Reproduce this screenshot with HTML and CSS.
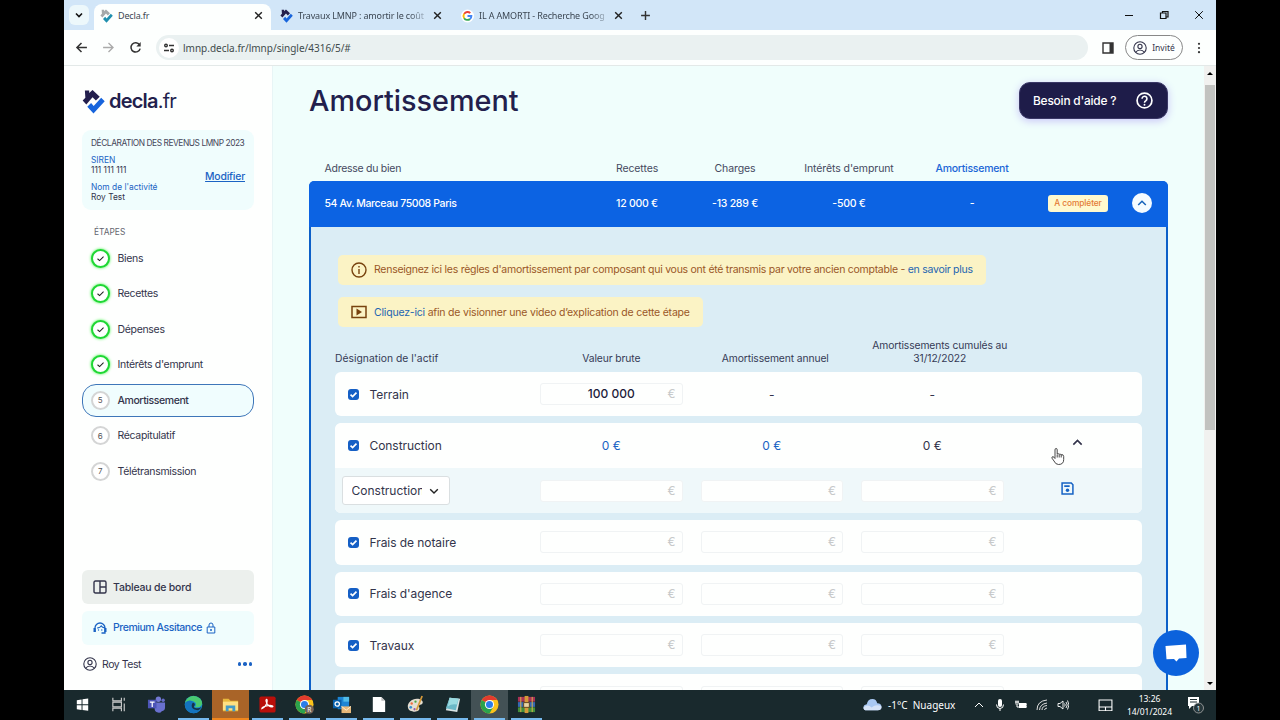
FILE: index.html
```html
<!DOCTYPE html>
<html lang="fr">
<head>
    <meta charset="UTF-8">
    <title>Decla.fr</title>
    <link rel="stylesheet" href="styles.css">
</head>
<body>
<svg class="sprite">
    <symbol id="x" viewBox="0 0 10 10"><path d="M2 2l6 6M8 2l-6 6" fill="none" stroke="currentColor" stroke-width="1.3"/></symbol>
    <symbol id="up" viewBox="0 0 10 10"><path d="M1.2 7L5 3.2 8.8 7" fill="none" stroke="currentColor" stroke-width="1.5"/></symbol>
    <symbol id="check" viewBox="0 0 10 10"><path d="M1.7 5.3l2.3 2L8.4 3" fill="none" stroke="currentColor" stroke-width="1.2"/></symbol>
    <symbol id="tick" viewBox="0 0 10 10"><path d="M1.700 5.200l2.300 2.200L8.300 3" fill="none" stroke="currentColor" stroke-width="1.900"/></symbol>
    <symbol id="user" viewBox="0 0 14 14"><g fill="none" stroke="currentColor" stroke-width="1.1"><circle cx="7" cy="7" r="6.2"/><circle cx="7" cy="5.4" r="2.1"/><path d="M2.8 11.2c1.8-3 6.600-3 8.400 0"/></g></symbol>
    <symbol id="logo" viewBox="0 0 24 26"><path class="roof" d="M3 1.500h4.500V4l3.500-3 7.500 7-4 4-3.500-3.500-6.500 7.500L.7 12 3.500 9z"/><path class="tick" d="M5.500 18.500l4-4 2.700 3.200 7.800-8.700 3.700 3.700L12 25.500z"/></symbol>
    <symbol id="chrome" viewBox="0 0 20 20"><circle cx="10" cy="10" r="9.500" fill="#fbc31b"/><path d="M10 10L1.800 5.250A9.500 9.500 0 0 1 18.200 5.250H10z" fill="#e33b2e"/><path d="M10 10L1.800 5.250A9.500 9.500 0 0 0 10 19.500l4.100-7.100z" fill="#2ba24c"/><circle cx="10" cy="10" r="4.800" fill="#fff"/><circle cx="10" cy="10" r="3.700" fill="#2b7de9"/></symbol>
</svg>
<div class="screen">
    <div class="tabs">
        <span class="tab-list"><svg viewBox="0 0 10 10" width="10"><path d="M2 3.500l3 3 3-3" fill="none" stroke="#111" stroke-width="1.600"/></svg></span>
        <div class="tab active">
            <svg class="favicon pale"><use href="#logo"/></svg>
            <span class="tab-name">Decla.fr</span>
            <svg class="close"><use href="#x"/></svg>
        </div>
        <div class="tab second">
            <svg class="favicon"><use href="#logo"/></svg>
            <span class="tab-name fade">Travaux LMNP : amortir le coût</span>
            <svg class="close"><use href="#x"/></svg>
        </div>
        <div class="tab third">
            <svg class="favicon" viewBox="0 0 14 14"><circle cx="7" cy="7" r="7" fill="#fff"/><g fill="none" stroke-width="2"><path d="M3.400 4.700A4.200 4.200 0 0 1 10 4" stroke="#ea4335"/><path d="M3.400 9.300a4.200 4.200 0 0 1 0-4.600" stroke="#fbbc05"/><path d="M3.400 9.300A4.200 4.200 0 0 0 9.700 10.200" stroke="#34a853"/><path d="M7 7h4.200a4 4 0 0 1-1.500 3.200" stroke="#4285f4"/></g></svg>
            <span class="tab-name fade">IL A AMORTI - Recherche Goog</span>
            <svg class="close"><use href="#x"/></svg>
        </div>
        <svg class="plus" viewBox="0 0 10 10"><path d="M5 1v8M1 5h8" stroke="#333" stroke-width="1.300"/></svg>
        <div class="window-buttons">
            <svg viewBox="0 0 10 10"><path d="M1 5.500h8" stroke="#111"/></svg>
            <svg viewBox="0 0 10 10"><path d="M1.500 3h5.500v5.500H1.500zM3.500 3V1.500h5.500V7H7" fill="none" stroke="#111" stroke-width="1.200"/></svg>
            <svg viewBox="0 0 10 10"><path d="M1.200 1.200l7.600 7.600M8.800 1.200L1.200 8.800" stroke="#111"/></svg>
        </div>
    </div>
    <div class="toolbar">
        <svg class="nav" viewBox="0 0 12 12"><path d="M11 6H2M6 1.800L1.800 6 6 10.200" fill="none" stroke="#333" stroke-width="1.400"/></svg>
        <svg class="nav" viewBox="0 0 12 12"><path d="M1 6h9M6 1.800L10.200 6 6 10.200" fill="none" stroke="#aaa" stroke-width="1.200"/></svg>
        <svg class="nav" viewBox="0 0 12 12"><path d="M9.700 3.500A4.300 4.300 0 1 0 10.300 7" fill="none" stroke="#333" stroke-width="1.400"/><path d="M10.800 1v4h-4z" fill="#333"/></svg>
        <div class="address">
            <span class="site-info"><svg viewBox="0 0 12 12" width="12"><g fill="none" stroke="#333" stroke-width="1.400"><circle cx="3" cy="3.500" r="1.300"/><path d="M6 3.500h5M1 8.500h5"/><circle cx="9" cy="8.500" r="1.300"/></g></svg></span>
            <span>lmnp.decla.fr/lmnp/single/4316/5/#</span>
        </div>
        <svg class="panel-icon" viewBox="0 0 12 12"><path d="M1 1h10v10H1z" fill="none" stroke="#333" stroke-width="1.400"/><path d="M7.500 1H11v10H7.500z" fill="#333"/></svg>
        <span class="guest"><svg><use href="#user"/></svg>Invité</span>
        <svg class="kebab" viewBox="0 0 4 12"><g fill="#333"><circle cx="2" cy="1.800" r="1.100"/><circle cx="2" cy="6" r="1.100"/><circle cx="2" cy="10.200" r="1.100"/></g></svg>
    </div>
    <div class="page">
        <aside class="sidebar">
            <div class="brand"><svg><use href="#logo"/></svg><span>decla<i>.fr</i></span></div>
            <div class="declaration">
                <p class="caption">DÉCLARATION DES REVENUS LMNP 2023</p>
                <div class="company">
                    <div>
                        <p class="blue">SIREN</p>
                        <p>111 111 111</p>
                        <p class="blue name">Nom de l'activité</p>
                        <p>Roy Test</p>
                    </div>
                    <a href="#">Modifier</a>
                </div>
            </div>
            <p class="steps-title">ÉTAPES</p>
            <ul class="steps">
                <li><b class="done"><svg><use href="#check"/></svg></b>Biens</li>
                <li><b class="done"><svg><use href="#check"/></svg></b>Recettes</li>
                <li><b class="done"><svg><use href="#check"/></svg></b>Dépenses</li>
                <li><b class="done"><svg><use href="#check"/></svg></b>Intérêts d'emprunt</li>
                <li class="current"><b>5</b>Amortissement</li>
                <li><b>6</b>Récapitulatif</li>
                <li><b>7</b>Télétransmission</li>
            </ul>
            <div class="side-links">
                <div class="dashboard"><svg viewBox="0 0 14 14"><path d="M2.500 1h9q1.500 0 1.500 1.500v9q0 1.500-1.500 1.500h-9Q1 13 1 11.500v-9Q1 1 2.500 1zM7 1v12M7 7h6" fill="none" stroke="currentColor" stroke-width="1.400"/></svg>Tableau de bord</div>
                <div class="premium"><svg viewBox="0 0 14 14"><path d="M2 11V7a5 5 0 0 1 10 0v5H8.500M4.300 7c2.500-.2 3.400-1.200 3.900-2 .8 1.300 2 1.800 3.500 1.800" fill="none" stroke="currentColor" stroke-width="1.300"/><path d="M.5 7h2.200v4H.5zM11.300 7h2.200v4h-2.200z" fill="currentColor"/><circle cx="5.500" cy="9" r=".7" fill="currentColor"/><circle cx="8.800" cy="9" r=".7" fill="currentColor"/></svg><span>Premium Assitance</span><svg class="lock" viewBox="0 0 10 12"><path d="M1.200 5h7.600v6H1.200zM3 5V3a2 2 0 0 1 4 0v2" fill="none" stroke="currentColor"/><circle cx="5" cy="8" r="1" fill="currentColor"/></svg></div>
                <div class="account"><svg><use href="#user"/></svg>Roy Test<span class="dots"><i></i><i></i><i></i></span></div>
            </div>
        </aside>
        <main>
            <div class="heading">
                <h1>Amortissement</h1>
                <button>Besoin d'aide ?<svg viewBox="0 0 16 16"><circle cx="8" cy="8" r="7" fill="none" stroke="#fff" stroke-width="1.600"/><path d="M5.700 6.300a2.300 2.300 0 1 1 3.600 1.900Q8 9 8 10" fill="none" stroke="#fff" stroke-width="1.500"/><circle cx="8" cy="12" r=".9" fill="#fff"/></svg></button>
            </div>
            <div class="property-grid property-labels">
                <span>Adresse du bien</span><span>Recettes</span><span>Charges</span><span>Intérêts d'emprunt</span><span class="selected">Amortissement</span>
            </div>
            <section class="property">
                <div class="property-grid property-head">
                    <span>54 Av. Marceau 75008 Paris</span><span>12 000 €</span><span>-13 289 €</span><span>-500 €</span><span>-</span><span><em>A compléter</em></span><span class="toggle"><svg><use href="#up"/></svg></span>
                </div>
                <div class="property-body">
                    <div class="notice first"><svg viewBox="0 0 16 16"><circle cx="8" cy="8" r="7" fill="none" stroke="currentColor" stroke-width="1.400"/><path d="M8 7v5M8 4v1.600" stroke="currentColor" stroke-width="1.400"/></svg><span>Renseignez ici les règles d'amortissement par composant qui vous ont été transmis par votre ancien comptable - <a>en savoir plus</a></span></div>
                    <div class="notice video"><svg viewBox="0 0 16 16"><path d="M1 2.500h14v11H1z" fill="none" stroke="currentColor" stroke-width="1.500"/><path d="M5.500 4.500L11 8l-5.500 3.500z" fill="currentColor"/></svg><span><a>Cliquez-ici</a> afin de visionner une video d’explication de cette étape</span></div>
                    <div class="asset-grid asset-labels">
                        <span>Désignation de l'actif</span><span>Valeur brute</span><span class="yearly">Amortissement annuel</span><span class="total">Amortissements cumulés au 31/12/2022</span>
                    </div>
                    <div class="assets">
                        <div class="asset asset-grid">
                            <label><b><svg><use href="#tick"/></svg></b>Terrain</label>
                            <span class="field">100 000<i>€</i></span><span>-</span><span>-</span>
                        </div>
                        <div class="asset-group">
                            <div class="asset asset-grid">
                                <label><b><svg><use href="#tick"/></svg></b>Construction</label>
                                <span class="blue">0 €</span><span class="blue">0 €</span><span>0 €</span>
                                <svg class="collapse"><use href="#up"/></svg>
                            </div>
                            <div class="component asset-grid">
                                <div class="select"><span>Construction</span><svg viewBox="0 0 10 10"><path d="M1.200 3.200L5 7l3.800-3.800" fill="none" stroke="#222" stroke-width="1.400"/></svg></div>
                                <span class="field"><i>€</i></span><span class="field"><i>€</i></span><span class="field"><i>€</i></span>
                                <svg class="save" viewBox="0 0 12 12"><path d="M1 1h8.500L11 2.500V11H1z" fill="none" stroke="currentColor" stroke-width="1.400"/><path d="M3 3h5v1.600H3z" fill="currentColor"/><circle cx="6" cy="7.700" r="1.600" fill="currentColor"/></svg>
                            </div>
                        </div>
                        <div class="asset asset-grid">
                            <label><b><svg><use href="#tick"/></svg></b>Frais de notaire</label>
                            <span class="field"><i>€</i></span><span class="field"><i>€</i></span><span class="field"><i>€</i></span>
                        </div>
                        <div class="asset asset-grid">
                            <label><b><svg><use href="#tick"/></svg></b>Frais d'agence</label>
                            <span class="field"><i>€</i></span><span class="field"><i>€</i></span><span class="field"><i>€</i></span>
                        </div>
                        <div class="asset asset-grid">
                            <label><b><svg><use href="#tick"/></svg></b>Travaux</label>
                            <span class="field"><i>€</i></span><span class="field"><i>€</i></span><span class="field"><i>€</i></span>
                        </div>
                        <div class="asset asset-grid"><label></label><span class="field"></span><span class="field"></span><span class="field"></span></div>
                    </div>
                </div>
            </section>
        </main>
        <div class="scrollbar"><svg viewBox="0 0 8 8"><path d="M1 6l3-3 3 3z"/></svg><span class="thumb"></span><svg viewBox="0 0 8 8"><path d="M1 2l3 3 3-3z"/></svg></div>
        <div class="chat"><svg viewBox="0 0 22 18"><path d="M.5 2L21 .5l.5 13.500-7.500.5-2.500 3-2.500-2.500-7.500.3z" fill="#fff"/></svg></div>
        <svg class="pointer" viewBox="0 0 14 18"><path d="M4 10V2.300q0-1.300 1.100-1.300t1.100 1.300V6.500q1-.9 1.900.3 1-.8 1.900.4 2.500-.7 2.700 1.800v3q0 5-5.200 5Q4.500 17 3 13.500L1 10.700q-.5-1.500.9-1.500Q3 9.200 4 11zM6.200 7v3M8.200 7.200V10M10.200 7.500V10" fill="#fff" stroke="#333" stroke-width=".9"/></svg>
    </div>
    <div class="taskbar">
        <span><svg viewBox="0 0 20 20"><path d="M4 5.500l5-.8v5H4zM10 4.500l6-.9v6.100h-6zM4 10.700h5v5l-5-.8zM10 10.700h6v6l-6-.9z" fill="#fff"/></svg></span>
        <span><svg viewBox="0 0 20 20"><path d="M3 3v3h9V3M3 17v-3h9v3M3 7.500h9v5H3zM15 3v3M15 9v8" fill="none" stroke="#ccc" stroke-width="1.200"/></svg></span>
        <span><svg viewBox="0 0 20 20"><circle cx="12" cy="4.500" r="2.800" fill="#7379d5"/><circle cx="17" cy="5.500" r="1.800" fill="#656bc8"/><path d="M8 8h11v5q0 4-3.500 4-1 2-4 1.500-3.500-.5-3.500-4.500z" fill="#6970cf"/><path d="M1 5h9v9H1z" fill="#4d55b7"/><path d="M3 7.500h5M5.500 7.500v5" stroke="#fff" stroke-width="1.300"/></svg></span>
        <span class="open"><svg viewBox="0 0 20 20"><circle cx="10" cy="10" r="9.300" fill="#1688cd"/><path d="M1 9C2 2 9-.5 14.500 2 20 4.600 21 12 15 13h-4q3-3 .5-5.500Q8 5 4 6.500z" fill="#49ca72"/><path d="M1.500 7.500Q7 3.700 9.500 8q-3 2-.5 5.800 2.500 3.300 8 1.700-4.500 5.400-10 3Q1 16 1 10z" fill="#1473bf"/><path d="M9.500 8q2 .5 2 2.500-2 2-.3 2.800 3.800 1.600 7-.6-1.200 3.600-5 3.200Q8 15 8 11q.2-2 1.500-3z" fill="#17324a"/></svg></span>
        <span class="open explorer"><svg viewBox="0 0 20 20"><path d="M2 4h6l2 2h8v11H2z" fill="#e9b83d"/><path d="M2 7h16v9H2z" fill="#ffe083"/><path d="M5 17v-6h10v6h-3v-3H8v3z" fill="#459bc7"/></svg></span>
        <span class="open"><svg viewBox="0 0 20 20"><rect x="1.500" y="1.500" width="17" height="17" rx="2" fill="#b90f0a"/><path d="M4 14.500c2-.3 6-5 5.700-8.500-.2-2.700-2-1.500-1 1.500s4 5.500 6.300 5c2.300-.8-.8-2-4.500-1.300S4 13 4 14.500z" fill="none" stroke="#fff" stroke-width="1.200"/></svg></span>
        <span class="open"><svg viewBox="0 0 20 20"><use href="#chrome"/><circle cx="15" cy="15" r="4.800" fill="#766458"/><text x="13" y="17.500">R</text></svg></span>
        <span class="open"><svg viewBox="0 0 20 20"><path d="M6 2h12v13H6z" fill="#1d85d4"/><path d="M12 2h6v5h-6z" fill="#50bce9"/><path d="M1 5h9v9H1z" fill="#0861ad"/><circle cx="5.500" cy="9.500" r="2.300" fill="none" stroke="#fff" stroke-width="1.300"/><path d="M10 12h10v7H10z" fill="#e8b878"/><path d="M10 12l5 4 5-4" fill="none" stroke="#fff0d0"/></svg></span>
        <span class="open"><svg viewBox="0 0 20 20"><path d="M4 2h9l4 4v12H4z" fill="#fff"/><path d="M13 2v4h4z" fill="#bbb"/></svg></span>
        <span class="open"><svg viewBox="0 0 20 20"><path d="M2 13C1 8 7 3 13 4c5 1 6 5 3 6-3 .8-3 1.500-2 3 1 3-2 5-6 4.500S2.500 16 2 13z" fill="#e5ded1"/><circle cx="6" cy="9" r="1.300" fill="#ef6b42"/><circle cx="10" cy="7" r="1.200" fill="#46a647"/><circle cx="5" cy="13" r="1.400" fill="#398ed0"/><circle cx="9" cy="15" r="1.200" fill="#9a59a8"/><path d="M17 1l-6 15" stroke="#d89b3b" stroke-width="1.800"/></svg></span>
        <span class="open"><svg viewBox="0 0 20 20"><path d="M7 3l11 1-3 14-12-2z" fill="#d9e3e4"/><path d="M7 3l9.500 1-3 12L3 14z" fill="#6bb8c7"/><path d="M7 3l9.500 1-2 6Q9 9 5 12z" fill="#9bdbe1"/></svg></span>
        <span class="open browser"><svg viewBox="0 0 20 20"><use href="#chrome"/></svg></span>
        <span class="open"><svg viewBox="0 0 20 20"><path d="M1 2h18v5H1z" fill="#a83256"/><path d="M1 7.500h18v5H1z" fill="#3569b3"/><path d="M1 13h18v5H1z" fill="#438e3a"/><path d="M8 1h4v18H8z" fill="#d59a38"/><path d="M7 8h6v5H7z" fill="#ead4a4" stroke="#63431b"/><path d="M4 2v16M16 2v16" stroke="#e2b84b"/></svg></span>
        <div class="tray">
            <svg class="cloud" viewBox="0 0 20 14"><path d="M4 13q-3.500 0-3.500-3T4 6.500Q5 1 10 1q4 0 5 4.500 4.500.2 4.500 4 0 3.500-4 3.500z" fill="#a9c8f2"/><path d="M4 13q-3.500 0-3.500-3Q5 6 9 10q5-4 10.500-1 0 4-4 4z" fill="#d6e3f7"/></svg>
            <span class="weather">-1°C&nbsp; Nuageux</span>
            <svg class="small" viewBox="0 0 12 12"><path d="M2 8l4-4 4 4" fill="none" stroke="#fff"/></svg>
            <svg class="small" viewBox="0 0 12 12"><rect x="4" y="0" width="4" height="8" rx="2" fill="#fff"/><path d="M2.500 5.500q0 4 3.500 4t3.500-4M6 9.500V12" fill="none" stroke="#fff"/></svg>
            <svg class="small" viewBox="0 0 12 12"><path d="M4 4h7v5H4z" fill="#fff"/><path d="M11 5h1v3h-1M0 3h4M1 1.500v4M3 1.500v4M2 5v3h3" fill="none" stroke="#fff"/></svg>
            <svg class="small" viewBox="0 0 12 12"><g fill="none" stroke="#ddd"><path d="M1 11Q1 2 11 1M3.500 11Q4 5 11 4M6 11q0-4 5-4.500M8.500 11q0-1.500 2.500-2"/></g></svg>
            <svg class="small" viewBox="0 0 12 12"><path d="M1 4.500h2L6 2v8L3 7.500H1zM7.500 4.500q1.500 1.500 0 3M9 3q2.500 3 0 6M10.500 1.500q3 4.500 0 9" fill="none" stroke="#fff" stroke-width=".9"/></svg>
            <svg class="touchpad" viewBox="0 0 14 12"><path d="M1 1h12v10H1zM1 7.500h12M7 7.500V11" fill="none" stroke="#fff"/></svg>
            <span class="clock">13:26<br>14/01/2024</span>
            <svg class="alerts" viewBox="0 0 20 18"><path d="M2 1h11v9H6l-3 3v-3H2z" fill="#fff"/><path d="M4 3.500h7M4 6h7" stroke="#1a292d"/><circle cx="12.500" cy="12" r="5" fill="#26363a" stroke="#aaa" stroke-width=".8"/><text x="10.500" y="15">1</text></svg>
        </div>
    </div>
</div>
</body>
</html>
```
FILE: styles.css
```css
*{
    box-sizing: border-box;
}
body,h1,p,ul{
    margin: 0;
    padding: 0;
}
body{
    width: 1280px;
    height: 720px;
    overflow: hidden;
    background: #000;
    font-family: Inter, "Liberation Sans", sans-serif;
    color: #33344b;
}
svg{
    flex: none;
}
i,em{
    font-style: normal;
}
.sprite{
    position: absolute;
    width: 0;
    height: 0;
}
.screen{
    width: 1152px;
    height: 720px;
    margin: 0 auto;
    display: flex;
    flex-direction: column;
}
.roof{
    fill: var(--roof, #231f4d);
}
.tick{
    fill: var(--tick, #1764dc);
}
.pale{
    --roof: #a5a9aa;
    --tick: #1f8fae;
}
.blue{
    color: #1b63c4;
}

/* browser */
.tabs{
    display: flex;
    align-items: center;
    height: 30px;
    background: #d2e6f8;
    font: 9px "Noto Sans", sans-serif;
    color: #3b4652;
}
.tab-list{
    display: flex;
    align-items: center;
    justify-content: center;
    width: 20px;
    height: 20px;
    margin: 0 5px;
    border-radius: 6px;
    background: #edf8fb;
}
.tab{
    display: flex;
    align-items: center;
    height: 26px;
    margin-top: 4px;
    padding: 0 7px 3px;
}
.active{
    width: 177px;
    border-radius: 8px 8px 0 0;
    background: #fdfffe;
}
.active .favicon{
    margin-left: -1px;
}
.second{
    width: 182px;
    padding-left: 9px;
    padding-right: 10px;
}
.third{
    width: 178px;
    padding-left: 8px;
}
.favicon{
    width: 13px;
    height: 14px;
    margin-right: 5px;
}
.tab-name{
    flex: 1;
    overflow: hidden;
    white-space: nowrap;
    letter-spacing: -.150px;
}
.fade{
    -webkit-mask-image: linear-gradient(90deg, #000 88%, rgba(0,0,0,.3) 100%);
}
.second .tab-name,.third .tab-name{
    flex: 0 0 126px;
}
.close{
    width: 11px;
    height: 11px;
    margin-left: auto;
    color: #222;
}
.plus{
    width: 11px;
    margin-left: 9px;
}
.window-buttons{
    display: flex;
    gap: 25px;
    margin-left: auto;
    padding-right: 12px;
}
.window-buttons svg{
    width: 10px;
}
.toolbar{
    display: flex;
    align-items: center;
    height: 36px;
    padding: 0 10px 0 11px;
    background: #fdfffe;
    border-bottom: 1px solid #e3e9e8;
}
.nav{
    width: 13px;
    margin-right: 14px;
}
.address{
    display: flex;
    align-items: center;
    gap: 4px;
    width: 932px;
    height: 25px;
    padding-left: 3px;
    border-radius: 13px;
    background: #eaf1f1;
    font: 10px "Noto Sans", sans-serif;
    color: #414b4c;
}
.site-info{
    display: flex;
    align-items: center;
    justify-content: center;
    width: 20px;
    height: 20px;
    border-radius: 50%;
    background: #fff;
}
.panel-icon{
    width: 12px;
    margin-left: 14px;
}
.guest{
    display: flex;
    align-items: center;
    justify-content: center;
    gap: 5px;
    width: 58px;
    height: 25px;
    margin-left: 11px;
    border: 1px solid #888;
    border-radius: 13px;
    font: 8.500px "Noto Sans", sans-serif;
}
.guest svg{
    width: 14px;
    height: 14px;
}
.kebab{
    width: 4px;
    margin-left: 14px;
}

/* page */
.page{
    position: relative;
    display: flex;
    height: 624px;
    overflow: hidden;
    background: #f0fefc;
}
.sidebar{
    display: flex;
    flex-direction: column;
    width: 209px;
    padding: 22px 18px 16px 18px;
    border-right: 1px solid #e8f5f6;
    background: #fefffe;
}
.brand{
    display: flex;
    align-items: center;
    gap: 4px;
    height: 26px;
    color: #231f4d;
    font-size: 20px;
    font-weight: 600;
    letter-spacing: -.8px;
}
.brand svg{
    width: 23px;
    height: 25px;
}
.brand span{
    line-height: 22px;
}
.brand i{
    font-weight: 400;
}
.declaration{
    height: 80px;
    margin-top: 16px;
    padding: 8px 9px;
    border-radius: 9px;
    background: #f0fdfd;
    font-size: 8.400px;
    line-height: 10.500px;
    white-space: nowrap;
}
.caption{
    color: #444659;
    letter-spacing: -.450px;
}
.company{
    display: flex;
    align-items: center;
    justify-content: space-between;
    margin-top: 6px;
}
.company .name{
    margin-top: 6px;
}
.company a{
    padding-bottom: 2px;
    color: #1b63c4;
    font-size: 10.400px;
    font-weight: 500;
    letter-spacing: -.2px;
}
.steps-title{
    margin: 16px 0 0 12px;
    color: #63656e;
    font-size: 8.400px;
    line-height: 12px;
}
.steps{
    margin-top: 4px;
    list-style: none;
}
.steps li{
    display: flex;
    align-items: center;
    height: 33px;
    margin-bottom: 2.450px;
    padding-left: 7.500px;
    border: 1px solid transparent;
    border-radius: 14px;
    font-size: 10.500px;
    letter-spacing: -.320px;
}
.steps .current{
    border-color: #3e76b9;
    background: #f0fdfe;
    font-weight: 500;
    letter-spacing: -.420px;
}
.steps b{
    display: flex;
    align-items: center;
    justify-content: center;
    width: 19px;
    height: 19px;
    margin-right: 8px;
    border: 2px solid #d4d5d5;
    border-radius: 50%;
    background: #fff;
    color: #555;
    font-size: 8px;
    font-weight: 400;
}
.steps .done{
    border-color: #20d735;
    box-shadow: 0 0 3px #37f23d;
    color: #222;
}
.steps svg{
    width: 9px;
    height: 9px;
}
.side-links{
    margin-top: auto;
    font-size: 10.500px;
    font-weight: 500;
    letter-spacing: -.200px;
}
.side-links svg{
    width: 14px;
    height: 14px;
    margin-right: 6px;
}
.dashboard,.premium{
    display: flex;
    align-items: center;
    height: 34px;
    padding-left: 11px;
    border-radius: 6px;
    background: #ecf0ed;
}
.premium{
    margin-top: 7px;
    padding-bottom: 1px;
    background: #f0fdfd;
    color: #1b63c4;
    letter-spacing: -.450px;
}
.premium .lock{
    width: 10px;
    height: 12px;
    margin-left: 4px;
}
.account{
    display: flex;
    align-items: center;
    height: 20px;
    margin-top: 9px;
    padding-left: 1px;
    font-weight: 400;
    letter-spacing: -.450px;
}
.account svg{
    margin-right: 5px;
}
.dots{
    display: flex;
    gap: 2px;
    margin-left: auto;
    padding-right: 2px;
}
.dots i{
    width: 3.500px;
    height: 3.500px;
    border-radius: 50%;
    background: #1b63c4;
}
main{
    width: 895px;
    padding: 16px 0 0 36px;
}
.heading{
    display: flex;
    justify-content: space-between;
    align-items: center;
    height: 37px;
}
h1{
    color: #231f4d;
    font-size: 28.800px;
    font-weight: 500;
    line-height: 37px;
}
.heading button{
    display: flex;
    align-items: center;
    justify-content: space-between;
    width: 149px;
    height: 37px;
    padding: 0 14px 0 13px;
    border: 1px solid #3a3766;
    border-radius: 11px;
    background: #1e1c49;
    box-shadow: 0 2px 8px #c8c5f7;
    color: #fff;
    font: 500 11.900px Inter, sans-serif;
    letter-spacing: -.200px;
}
.heading button svg{
    width: 17px;
    height: 17px;
}
.property-grid{
    display: grid;
    grid-template-columns: 280px 96px 100px 128px 118px 94px 34px;
    align-items: center;
    text-align: center;
    font-size: 10.500px;
    letter-spacing: -.100px;
}
.property-grid > :first-child{
    padding-left: 15.500px;
    text-align: left;
}
.property-labels > :first-child{
    letter-spacing: -.270px;
}
.property-labels{
    height: 26px;
    margin-top: 36px;
    color: #454960;
}
.property-labels .selected{
    color: #1b66d7;
    font-weight: 500;
    letter-spacing: -.270px;
}
.property{
    width: 859px;
    height: 600px;
    border: 2px solid #0d60c8;
    border-radius: 6px;
    background: #dbedf5;
}
.property-head{
    height: 46px;
    margin: -2px -2px 0;
    padding-bottom: 2px;
    border-radius: 5px 5px 0 0;
    background: #0c63e3;
    color: #fff;
    font-weight: 500;
    letter-spacing: -.250px;
}
.property-head > :first-child{
    letter-spacing: -.370px;
}
.property-head em{
    display: inline-block;
    width: 60px;
    border-radius: 3px;
    background: #fff9ce;
    color: #e47b35;
    font-size: 8.400px;
    line-height: 17px;
    letter-spacing: -.1px;
}
.toggle{
    display: flex;
    align-items: center;
    justify-content: center;
    width: 20px;
    height: 20px;
    margin-left: 7px;
    border-radius: 50%;
    background: #f5fbff;
    color: #1763ba;
}
.toggle svg{
    width: 10px;
    height: 10px;
}
.property-body{
    padding: 28px 24px 0;
}
.notice{
    display: flex;
    align-items: center;
    gap: 7px;
    height: 30px;
    margin-left: 3px;
    padding-left: 13px;
    border-radius: 5px;
    background: #fbf3c5;
    color: #9a5727;
    font-size: 10.500px;
    white-space: nowrap;
}
.notice svg{
    width: 16px;
    height: 16px;
    color: #78430f;
}
.notice a{
    color: #2365b1;
}
.first{
    width: 647.500px;
    padding-bottom: 1px;
    letter-spacing: -.265px;
}
.video{
    width: 364.500px;
    margin-top: 12px;
    letter-spacing: -.200px;
}
.asset-grid{
    display: grid;
    grid-template-columns: 205px 142.500px 18px 142.500px 18px 142.500px 1fr;
    align-items: center;
    text-align: center;
}
.asset-grid > :nth-child(3){
    grid-column: 4;
}
.asset-grid > :nth-child(4){
    grid-column: 6;
}
.asset-grid > :nth-child(5){
    grid-column: 7;
}
.asset-labels{
    height: 41px;
    align-items: end;
    padding-bottom: 3px;
    font-size: 10.300px;
    line-height: 13px;
    letter-spacing: -.100px;
    color: #363b55;
}
.asset-labels > :first-child{
    text-align: left;
    letter-spacing: .030px;
}
.asset-labels .yearly{
    padding-left: 7px;
}
.asset-labels .total{
    margin-right: -15px;
}
.assets{
    display: flex;
    flex-direction: column;
    gap: 7px;
    margin-top: 4px;
}
.asset,.asset-group{
    width: 807px;
    border-radius: 6px;
    background: #fefffe;
    font-size: 12px;
}
.asset{
    height: 44.400px;
}
.asset label{
    display: flex;
    align-items: center;
    padding-left: 13px;
    letter-spacing: -.060px;
}
.asset label b{
    display: flex;
    align-items: center;
    justify-content: center;
    width: 11px;
    height: 11px;
    margin-right: 10.500px;
    border-radius: 3px;
    background: #155fc5;
    color: #fff;
}
.asset label svg{
    width: 9px;
    height: 9px;
}
.field{
    position: relative;
    height: 22px;
    border: 1px solid #f0f3f4;
    border-radius: 3px;
    background: #fefffe;
    color: #1d1b3a;
    font-weight: 500;
    line-height: 20px;
}
.field i{
    position: absolute;
    right: 6px;
    color: #c7c9ca;
    font-weight: 400;
}
.asset-group{
    overflow: hidden;
}
.component{
    height: 45.500px;
    background: #eff8fa;
}
.select{
    display: flex;
    align-items: center;
    width: 108.500px;
    height: 29px;
    margin-left: 6.500px;
    padding: 0 9px;
    border: 1px solid #dadfe1;
    border-radius: 3px;
    background: #fff;
}
.select span{
    width: 70.500px;
    overflow: hidden;
}
.select svg{
    width: 10px;
    margin-left: 7px;
}
.collapse{
    width: 11px;
    height: 11px;
    margin: -7px 0 0 68px;
}
.save{
    width: 13px;
    height: 13px;
    margin: -5px 0 0 57px;
    color: #1763c4;
}
.scrollbar{
    display: flex;
    flex-direction: column;
    align-items: center;
    width: 12px;
    margin-left: auto;
    padding: 3px 0 2px;
    background: #f1f1ef;
}
.scrollbar svg{
    width: 8px;
    height: 8px;
}
.thumb{
    width: 10px;
    height: 345px;
    margin: 8px 0 auto;
    background: #c2c3c0;
}
.chat{
    position: absolute;
    left: 1089px;
    top: 564px;
    display: flex;
    align-items: center;
    justify-content: center;
    width: 46px;
    height: 46px;
    border-radius: 50%;
    background: #0c62dc;
}
.chat svg{
    width: 22px;
}
.pointer{
    position: absolute;
    left: 987px;
    top: 381px;
    width: 14px;
    height: 19px;
}

/* taskbar */
.taskbar{
    display: flex;
    height: 30px;
    background: #19292d;
    color: #fff;
    font: 9.500px "Noto Sans", sans-serif;
}
.taskbar > span{
    display: flex;
    align-items: center;
    justify-content: center;
    width: 37px;
    border-bottom: 2px solid transparent;
}
.taskbar > span svg{
    width: 19px;
    height: 19px;
}
.taskbar .open{
    background: linear-gradient(#76b9ed, #76b9ed) bottom / 31px 2px no-repeat border-box;
}
.taskbar .explorer{
    background: #a96428;
    border-color: #ef861d;
}
.taskbar .browser{
    background-color: #435155;
}
.taskbar text{
    fill: #fff;
    font-size: 7px;
}
.tray{
    display: flex;
    align-items: center;
    margin-left: auto;
    padding-right: 10px;
    white-space: nowrap;
}
.cloud{
    width: 19px;
    margin-right: 6px;
}
.weather{
    width: 85px;
    font-size: 10px;
}
.small{
    width: 12px;
    height: 12px;
    margin-right: 9px;
}
.touchpad{
    width: 15px;
    margin: 0 13px 0 20px;
}
.clock{
    width: 47px;
    margin-right: 13px;
    font-size: 8.500px;
    line-height: 13px;
    text-align: center;
}
.alerts{
    width: 20px;
    height: 18px;
}
```
